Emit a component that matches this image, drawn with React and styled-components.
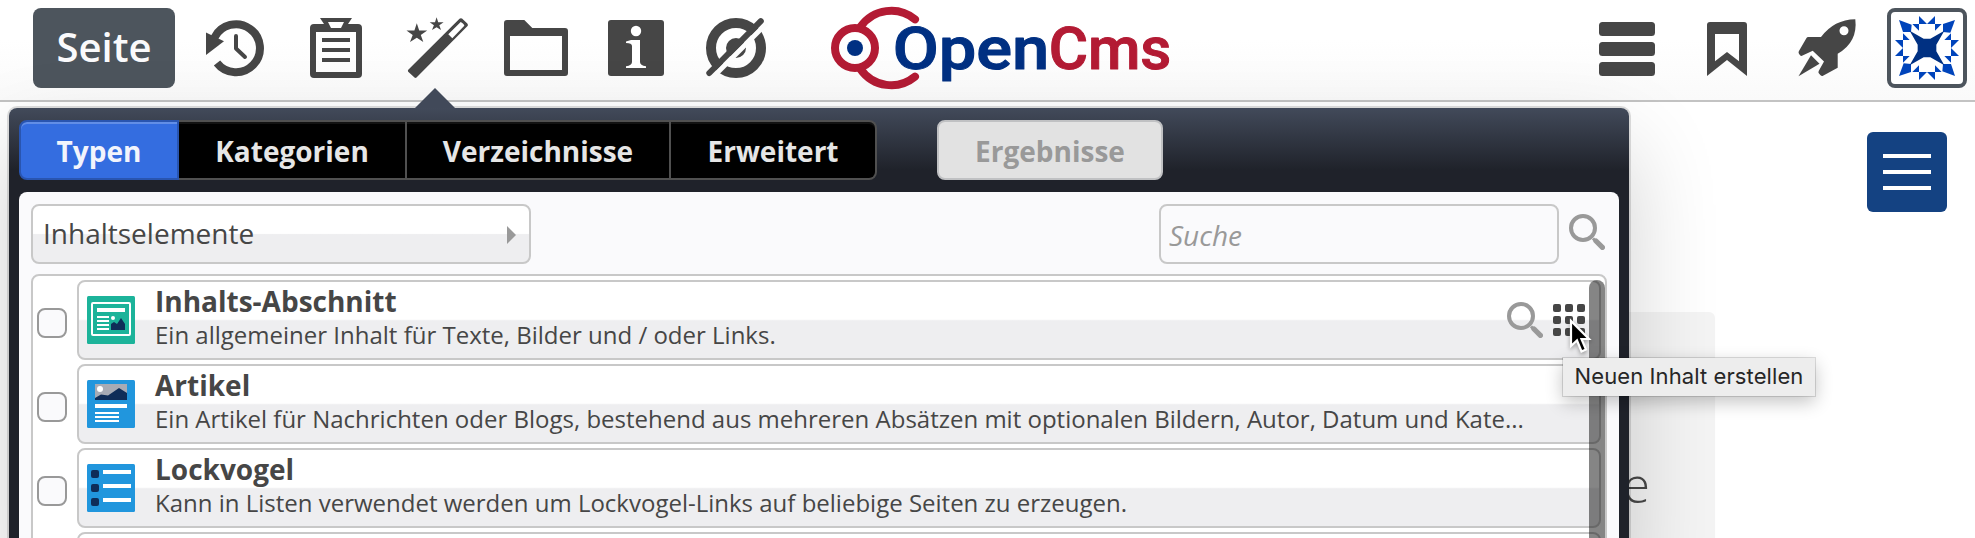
import React from "react";
import styled, { createGlobalStyle, css } from "styled-components";

const INK = "#464646";
const LINE = "#c8c8c8";

const GlobalStyle = createGlobalStyle`
  *, *::before, *::after { box-sizing: border-box; }
  html, body { margin: 0; padding: 0; }
  body {
    background: #fff;
    color: ${INK};
    font-family: "Open Sans", sans-serif;
    overflow: hidden;
  }
  button, input { font: inherit; color: inherit; }
`;

const Screen = styled.div`
  position: relative;
  width: 1975px;
  height: 538px;
  overflow: hidden;
`;

/* ---------- toolbar ---------- */

const Toolbar = styled.header`
  display: flex;
  justify-content: space-between;
  height: 102px;
  padding: 8px 8px 0 33px;
  border-bottom: 2px solid #c3c3c3;
  background: linear-gradient(#fff 40%, #fafafa);
`;

const ToolGroup = styled.div`
  display: flex;
  height: 80px;
`;

const ContextButton = styled.button`
  width: 142px;
  height: 80px;
  margin-right: 11px;
  padding: 0 0 4px;
  border: 0;
  border-radius: 8px;
  background: #4d555d;
  color: #fafafc;
  font-size: 40px;
  font-weight: 600;
`;

const ToolButton = styled.button`
  display: flex;
  align-items: center;
  justify-content: center;
  width: 100px;
  height: 80px;
  padding: 0;
  border: 0;
  background: none;
`;

const ToolIcon = styled.svg`
  display: block;
  width: 64px;
  height: 64px;
  fill: ${INK};
`;

const Logo = styled.svg`
  display: block;
  width: 342px;
  height: 84px;
  margin: -2px 0 0 44px;
  overflow: visible;
  font-family: "Roboto", sans-serif;
  font-weight: 500;
`;

const Avatar = styled.button`
  display: flex;
  align-items: center;
  justify-content: center;
  width: 80px;
  height: 80px;
  margin-left: 10px;
  padding: 0;
  border: 4px solid #4d555d;
  border-radius: 8px;
  background: #fff;
`;

/* ---------- page behind the popup ---------- */

const Page = styled.main`
  display: flex;
  justify-content: space-between;
  padding: 30px 28px 0 0;
`;

const Teaser = styled.section`
  width: 1515px;
  height: 300px;
  margin: 180px 0 0 200px;
  padding: 136px 65px 0 0;
  border-radius: 0 6px 0 0;
  background: #f4f4f4;
  color: #484848;
  font-size: 49px;
  font-weight: 300;
  line-height: 72px;
  text-align: right;
`;

const NavToggle = styled.button`
  display: flex;
  flex-direction: column;
  align-items: center;
  justify-content: center;
  gap: 12px;
  width: 80px;
  height: 80px;
  padding: 0;
  border: 0;
  border-radius: 6px;
  background: #144282;
`;

const NavBar = styled.span`
  width: 48px;
  height: 4px;
  background: #fff;
`;

/* ---------- popup ---------- */

const Popup = styled.section`
  position: absolute;
  left: 9px;
  top: 108px;
  width: 1620px;
  height: 460px;
  padding: 12px 10px 0;
  border-radius: 8px 8px 0 0;
  background: linear-gradient(#424a5a, #1f222a 62px);
  box-shadow: 0 0 0 2px rgba(0, 0, 0, 0.13), 0 40px 90px rgba(0, 0, 0, 0.19);
`;

const PopupArrow = styled.span`
  position: absolute;
  left: 406px;
  top: -20px;
  border: 20px solid transparent;
  border-top: 0;
  border-bottom-color: #414959;
`;

const TabBar = styled.nav`
  display: flex;
  height: 60px;
  margin-bottom: 12px;
`;

const Tab = styled.button`
  width: ${(p) => p.$width}px;
  height: 60px;
  padding: 1px 0 0;
  border: 2px solid #505050;
  border-left-width: 0;
  background: #000;
  color: #e6e6e6;
  font-size: 28px;
  font-weight: 700;
  box-shadow: inset 0 2px 0 #121212;

  ${(p) =>
    p.$active &&
    css`
      border: 2px solid #2955b0;
      border-radius: 8px 0 0 8px;
      background: #346de0;
      color: #f2f4fc;
      box-shadow: inset 0 2px 0 #628ee6;
    `}
  ${(p) => p.$last && "border-radius: 0 8px 8px 0;"}
`;

const ResultTab = styled(Tab)`
  margin-left: 60px;
  border: 2px solid #c0c1c3;
  border-radius: 8px;
  background: #e2e2e2;
  color: #999;
  box-shadow: none;
`;

const Content = styled.div`
  height: 380px;
  padding: 12px 12px 0;
  border-radius: 8px 8px 0 0;
  background: #fafafc;
`;

const FilterRow = styled.div`
  display: flex;
  align-items: flex-start;
  height: 70px;
`;

const Select = styled.button`
  display: flex;
  align-items: center;
  justify-content: space-between;
  width: 500px;
  height: 60px;
  padding: 0 13px 3px 10px;
  border: 2px solid ${LINE};
  border-radius: 8px;
  background: linear-gradient(#fff 49%, #eeeef0 51%);
  font-size: 28px;
`;

const Caret = styled.span`
  margin-top: 5px;
  border: 9px solid transparent;
  border-right: 0;
  border-left-color: #999;
`;

const SearchInput = styled.input`
  width: 400px;
  height: 60px;
  margin-left: auto;
  padding: 2px 8px 0;
  border: 2px solid ${LINE};
  border-radius: 8px;
  background: transparent;
  font-size: 28px;

  &::placeholder {
    color: #999;
    font-style: italic;
    opacity: 1;
  }
`;

const Glass = styled.svg`
  display: block;
  flex: none;
  width: 36px;
  height: 36px;
  margin: ${(p) => p.$margin || 0};
  fill: none;
  stroke: #999;
`;

const ListBox = styled.div`
  position: relative;
  width: 1576px;
  height: 300px;
  padding: 4px 4px 0;
  border: 2px solid ${LINE};
  border-radius: 8px;
  background: #fff;
  overflow: hidden;
`;

const Row = styled.div`
  display: flex;
  align-items: center;
  height: 80px;
  margin-bottom: 4px;
`;

const Checkbox = styled.span`
  flex: none;
  width: 30px;
  height: 30px;
  margin: 6px 10px 0 0;
  border: 2px solid #999;
  border-radius: 8px;
  background: #fafafc;
`;

const Card = styled.article`
  display: flex;
  flex: none;
  width: 1524px;
  height: 80px;
  padding: 14px 14px 0 8px;
  border: 2px solid ${LINE};
  border-radius: 8px;
  background: linear-gradient(#fff 49%, #eeeef0 51%);
`;

const TypeIcon = styled.svg`
  display: block;
  flex: none;
  width: 48px;
  height: 48px;
`;

const CardText = styled.div`
  width: 1380px;
  margin: -14px 0 0 20px;
  white-space: nowrap;
`;

const Title = styled.h3`
  margin: 0;
  font-size: 28px;
  font-weight: 700;
  line-height: 38px;
`;

const Description = styled.p`
  margin: 0;
  font-size: 24px;
  line-height: 30px;
`;

const CardActions = styled.div`
  display: flex;
  margin-left: auto;
  gap: 10px;
  padding-top: 6px;
`;

const GridIcon = styled.svg`
  display: block;
  width: 32px;
  height: 32px;
  margin-top: 2px;
  fill: ${INK};
`;

const ScrollThumb = styled.span`
  position: absolute;
  right: 0;
  top: 4px;
  width: 16px;
  height: 320px;
  border-radius: 8px;
  background: rgba(0, 0, 0, 0.48);
`;

const Tooltip = styled.div`
  position: absolute;
  left: 1563px;
  top: 358px;
  display: flex;
  align-items: center;
  justify-content: center;
  width: 252px;
  height: 38px;
  padding-bottom: 2px;
  background: #ededed;
  box-shadow: 0 0 0 1px rgba(0, 0, 0, 0.13), 0 6px 18px rgba(0, 0, 0, 0.24);
  color: #262626;
  font-family: "Inter", sans-serif;
  font-size: 22px;
  letter-spacing: 0.1px;
  white-space: nowrap;
`;

const Cursor = styled.svg`
  position: absolute;
  left: 1566px;
  top: 316px;
  width: 28px;
  height: 42px;
  filter: drop-shadow(0 2px 2px rgba(0, 0, 0, 0.35));
`;

/* ---------- icons ---------- */

const HistoryIcon = () => (
  <ToolIcon viewBox="0 0 64 64">
    <path d="M10.5 21.5A24 24 0 1 1 13 47" fill="none" stroke={INK} strokeWidth="8" />
    <path d="M2 16.500L20 25.200L2 39Z" />
    <path d="M32 20V32.500L41 41" fill="none" stroke={INK} strokeWidth="4" strokeLinecap="round" strokeLinejoin="round" />
  </ToolIcon>
);

const ClipboardIcon = () => (
  <ToolIcon viewBox="0 0 64 64">
    <path
      fillRule="evenodd"
      d="M16 2H48L44 8H54Q58 8 58 12V58Q58 62 54 62H10Q6 62 6 58V12Q6 8 10 8H20ZM24 6L27 12H37L40 6ZM12 16V56H52V16Z"
    />
    <path d="M18 22H46V26H18ZM18 32H46V36H18ZM18 42H46V46H18Z" />
  </ToolIcon>
);

const WandIcon = () => (
  <ToolIcon viewBox="0 0 64 64">
    <path
      fillRule="evenodd"
      d="M4.500 53.500L55.500 2.800Q56.700 1.600 58 2.600L63.300 7.500Q64.500 9 63.300 10.300L12.500 61.500Q11.500 62.400 10.500 61.500L4.500 56Q3.300 54.700 4.500 53.500ZM44.300 18.300L48.300 22.300L60.300 9.800Q60.500 8.500 56.700 6Z"
    />
    <path d="M12.800 7.300L15.200 14.500H23.200L16.800 19L19.300 26L12.800 21.700L6 26L8.700 19L2.500 14.500H10.400Z" />
    <path d="M32.600 1.200L34.200 6.200H39.600L35.300 9.300L37 14L32.600 11.200L28 14L29.900 9.300L25.700 6.200H31Z" />
  </ToolIcon>
);

const FolderIcon = () => (
  <ToolIcon viewBox="0 0 64 64">
    <path
      fillRule="evenodd"
      d="M3 4H20.300L28.300 12H61Q64 12 64 15V57Q64 60 61 60H3Q0 60 0 57V7Q0 4 3 4ZM6 20V54H58V20Z"
    />
  </ToolIcon>
);

const InfoIcon = () => (
  <ToolIcon viewBox="0 0 64 64">
    <rect x="4" y="4" width="56" height="56" rx="3" />
    <circle cx="32" cy="15" r="5.200" fill="#fff" />
    <path d="M22 25.500L27 24H36V46Q36 49.500 42 50.300V52H22V50.300Q28 49.500 28 46V30Q28 27 22 27Z" fill="#fff" />
  </ToolIcon>
);

const HiddenIcon = () => (
  <ToolIcon viewBox="0 0 64 64">
    <circle cx="32" cy="32" r="25" fill="none" stroke={INK} strokeWidth="10" />
    <circle cx="32" cy="32" r="10" />
    <path d="M4 66L63 7" stroke="#fdfdfd" strokeWidth="5" />
    <path d="M5.300 57L56.800 5.200" stroke={INK} strokeWidth="6" strokeLinecap="round" />
  </ToolIcon>
);

const MenuIcon = () => (
  <ToolIcon viewBox="0 0 64 64">
    <rect x="4" y="6" width="56" height="14" rx="3.500" />
    <rect x="4" y="26" width="56" height="14" rx="3.500" />
    <rect x="4" y="46" width="56" height="14" rx="3.500" />
  </ToolIcon>
);

const BookmarkIcon = () => (
  <ToolIcon viewBox="0 0 64 64">
    <path fillRule="evenodd" d="M12 60V9Q12 6 15 6H49Q52 6 52 9V60L32 44ZM20 18V45.300L32 36L44 45.300V18Z" />
  </ToolIcon>
);

const RocketIcon = () => (
  <ToolIcon viewBox="0 0 64 64">
    <path
      fillRule="evenodd"
      d="M60.300 3.200Q63 26 42.700 37.700V51.700L28 59.700Q26.700 60.300 25.300 59L24 57.500Q23 56.500 23.700 55L29 45.500L17.700 34.700L7 39.800Q6 40.200 5 39.200L4 37.800Q3.200 36.700 3.800 35.200L11.500 22Q12 21 13.300 21H26Q39 3.500 60.300 3.200ZM49 10.200A4.500 4.500 0 1 0 49 19.200A4.500 4.500 0 1 0 49 10.200Z"
    />
    <path d="M16 39.200L24.500 47.700L3.500 60.200Z" />
  </ToolIcon>
);

const OpenCmsLogo = () => (
  <Logo viewBox="90 18 1026 252">
    <g fill="none" stroke="#b31b34" strokeWidth="24" strokeLinecap="round">
      <path d="M345 58A112 112 0 0 0 182 80" />
      <path d="M345 230A112 112 0 0 1 182 208" />
      <circle cx="165" cy="144" r="60" />
    </g>
    <circle cx="165" cy="144" r="24" fill="#003082" />
    <g fontSize="180" strokeWidth="3" strokeLinejoin="round">
      <text x="278" y="208" fill="#003082" stroke="#003082" textLength="470" lengthAdjust="spacingAndGlyphs">Open</text>
      <text x="746" y="208" fill="#b31b34" stroke="#b31b34" textLength="368" lengthAdjust="spacingAndGlyphs">Cms</text>
    </g>
  </Logo>
);

const StarEmblem = () => (
  <svg width="64" height="64" viewBox="0 0 192 192">
    {[0, 90, 180, 270].map((a) => (
      <g key={a} transform={`rotate(${a} 96 96)`} fill="#0044bb">
        <path d="M12 12L50 26L48 48H24Z" />
        <path d="M72 0L96 24H72ZM120 0L96 24H120ZM52 24H72V44ZM140 24H120V44Z" />
      </g>
    ))}
    <path fill="#003082" d="M44 44L86 68H106L148 44L124 86V106L148 148L106 124H86L44 148L68 106V86Z" />
  </svg>
);

const MagnifierIcon = ({ margin }) => (
  <Glass viewBox="0 0 36 36" $margin={margin}>
    <circle cx="14" cy="14" r="12" strokeWidth="4" />
    <path d="M24 24.500L26 26.500" strokeWidth="3" />
    <path d="M27 27L33.400 33.400" strokeWidth="5.200" strokeLinecap="round" />
  </Glass>
);

const SectionType = () => (
  <TypeIcon viewBox="0 0 48 48">
    <rect width="48" height="48" rx="1.500" fill="#1cb39a" />
    <rect x="5" y="7" width="38" height="32" rx="1" fill="none" stroke="#fff" strokeWidth="2" />
    <path fill="#fff" d="M10 12H38V16H10ZM10 20H22V22H10ZM10 24H22V26H10ZM10 28H22V30H10ZM10 32H22V34H10Z" />
    <circle cx="26" cy="22" r="2" fill="#fff" />
    <path fill="#0f2d58" d="M24 34V28L27 26L30 28L34 22L38 28V34Z" />
  </TypeIcon>
);

const ArticleType = () => (
  <TypeIcon viewBox="0 0 48 48">
    <rect width="48" height="48" rx="1.500" fill="#2196dd" />
    <rect x="8" y="4" width="32" height="16" fill="#a7abb5" />
    <circle cx="13" cy="9" r="3" fill="#fff" />
    <path fill="#0f2d58" d="M8 20V18L14 14.500L21 15.500L32 8L40 13V20Z" />
    <path fill="#fff" d="M8 24H40V28H8ZM8 32H32V34H8ZM8 36H32V38H8ZM8 40H32V42H8Z" />
  </TypeIcon>
);

const TeaserType = () => (
  <TypeIcon viewBox="0 0 48 48">
    <rect width="48" height="48" rx="1.500" fill="#2196dd" />
    {[6, 20, 34].map((y) => (
      <g key={y}>
        <rect x="4" y={y} width="8" height="8" rx="2" fill="#0f2d58" />
        <rect x="16" y={y} width="28" height="4" fill="#fff" />
      </g>
    ))}
  </TypeIcon>
);

const CreateIcon = () => (
  <GridIcon viewBox="0 0 32 32">
    {[0, 12, 24].map((y) => [0, 12, 24].map((x) => <rect key={`${x}-${y}`} x={x} y={y} width="8" height="8" rx="2" />))}
  </GridIcon>
);

const TYPES = [
  {
    title: "Inhalts-Abschnitt",
    text: "Ein allgemeiner Inhalt für Texte, Bilder und / oder Links.",
    Icon: SectionType,
    hovered: true,
  },
  {
    title: "Artikel",
    text: "Ein Artikel für Nachrichten oder Blogs, bestehend aus mehreren Absätzen mit optionalen Bildern, Autor, Datum und Kate...",
    Icon: ArticleType,
  },
  {
    title: "Lockvogel",
    text: "Kann in Listen verwendet werden um Lockvogel-Links auf beliebige Seiten zu erzeugen.",
    Icon: TeaserType,
  },
];

export default function App() {
  return (
    <>
      <GlobalStyle />
      <Screen>
        <Toolbar>
          <ToolGroup>
            <ContextButton>Seite</ContextButton>
            <ToolButton><HistoryIcon /></ToolButton>
            <ToolButton><ClipboardIcon /></ToolButton>
            <ToolButton><WandIcon /></ToolButton>
            <ToolButton><FolderIcon /></ToolButton>
            <ToolButton><InfoIcon /></ToolButton>
            <ToolButton><HiddenIcon /></ToolButton>
            <OpenCmsLogo />
          </ToolGroup>
          <ToolGroup>
            <ToolButton><MenuIcon /></ToolButton>
            <ToolButton><BookmarkIcon /></ToolButton>
            <ToolButton><RocketIcon /></ToolButton>
            <Avatar><StarEmblem /></Avatar>
          </ToolGroup>
        </Toolbar>

        <Page>
          <Teaser>e</Teaser>
          <NavToggle>
            <NavBar />
            <NavBar />
            <NavBar />
          </NavToggle>
        </Page>

        <Popup>
          <PopupArrow />
          <TabBar>
            <Tab $active $width={160}>Typen</Tab>
            <Tab $width={228}>Kategorien</Tab>
            <Tab $width={264}>Verzeichnisse</Tab>
            <Tab $width={206} $last>Erweitert</Tab>
            <ResultTab $width={226}>Ergebnisse</ResultTab>
          </TabBar>
          <Content>
            <FilterRow>
              <Select>
                Inhaltselemente
                <Caret />
              </Select>
              <SearchInput placeholder="Suche" />
              <MagnifierIcon margin="10px 2px 0 10px" />
            </FilterRow>
            <ListBox>
              {TYPES.map(({ title, text, Icon, hovered }) => (
                <Row key={title}>
                  <Checkbox />
                  <Card>
                    <Icon />
                    <CardText>
                      <Title>{title}</Title>
                      <Description>{text}</Description>
                    </CardText>
                    {hovered && (
                      <CardActions>
                        <MagnifierIcon />
                        <CreateIcon />
                      </CardActions>
                    )}
                  </Card>
                </Row>
              ))}
              <Row>
                <Checkbox />
                <Card />
              </Row>
              <ScrollThumb />
            </ListBox>
          </Content>
        </Popup>

        <Tooltip>Neuen Inhalt erstellen</Tooltip>
        <Cursor viewBox="0 0 28 42">
          <path
            d="M5 5V30L11 24.500L15.500 35.500L20 33.500L15.500 23H23Z"
            fill="#000"
            stroke="#fff"
            strokeWidth="2.200"
            strokeLinejoin="miter"
          />
        </Cursor>
      </Screen>
    </>
  );
}
